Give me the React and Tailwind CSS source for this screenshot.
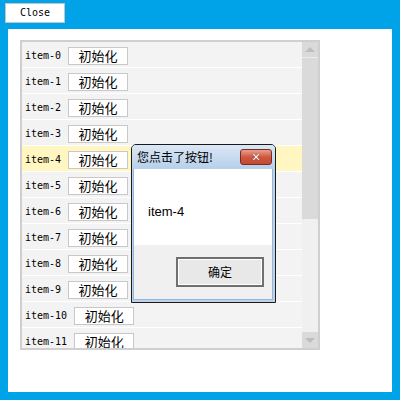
const items = Array.from({ length: 12 }, (_, i) => `item-${i}`)

function Row({ label, active }) {
  return (
    <div
      className={`h-[26px] shrink-0 flex items-center pl-[3px] pt-[2px] border-b border-white ${
        active ? 'bg-[#fff6c2]' : 'bg-[#f3f3f3]'
      }`}
    >
      <span className="text-[10px] leading-none text-black" style={{ fontFamily: '"DejaVu Sans Mono", "Liberation Mono", monospace' }}>
        {label}
      </span>
      <div className="ml-[7px] w-[60px] h-[18px] bg-white border border-[#c8c8c8] flex items-center justify-center text-[13px] leading-none text-black">
        初始化
      </div>
    </div>
  )
}

function Scrollbar() {
  return (
    <div className="w-[16px] h-full bg-[#f0f0f0] flex flex-col">
      <div className="h-[16px] bg-[#dadada] flex items-center justify-center border-b border-[#ececec]">
        <div className="w-0 h-0 border-l-[5px] border-r-[5px] border-b-[5px] border-l-transparent border-r-transparent border-b-[#bdbdbd]" />
      </div>
      <div className="h-[161px] bg-[#dadada]" />
      <div className="flex-1" />
      <div className="h-[16px] bg-[#dadada] flex items-center justify-center">
        <div className="w-0 h-0 border-l-[5px] border-r-[5px] border-t-[5px] border-l-transparent border-r-transparent border-t-[#bdbdbd]" />
      </div>
    </div>
  )
}

function Dialog() {
  return (
    <div className="absolute left-[131px] top-[144px] w-[145px] h-[159px] border border-[#1a1a1a] rounded-t-[5px] bg-[#bcd3ec] flex flex-col overflow-hidden">
      {/* title bar */}
      <div className="h-[24px] shrink-0 flex items-center justify-between pl-[5px] pr-[3px] bg-gradient-to-b from-[#dbe7f5] to-[#b6cfea]">
        <span className="text-[12px] leading-none text-black">您点击了按钮!</span>
        <div className="w-[32px] h-[16px] rounded-[3px] border border-[#7a2a1e] bg-gradient-to-b from-[#e7a08f] via-[#d0573e] to-[#c04a33] flex items-center justify-center">
          <span className="text-[11px] font-bold leading-none text-white" style={{ fontFamily: '"DejaVu Sans", sans-serif', textShadow: '0 0 1px #4a1a10' }}>
            ✕
          </span>
        </div>
      </div>
      <div className="flex-1 mx-[1px] mb-[2px] mr-[2px] flex flex-col border border-[#98b4d8] border-t-0">
        <div className="h-[76px] bg-white pl-[14px] pt-[28px]">
          <span className="text-[13px] leading-none text-black" style={{ fontFamily: '"Liberation Sans", Arial, sans-serif' }}>
            item-4
          </span>
        </div>
        <div className="flex-1 bg-[#f0f0f0] flex justify-end items-start pt-[12px] pr-[8px]">
          <div className="w-[88px] h-[30px] border-2 border-[#6f6f6f] bg-[#e8e8e8] flex items-center justify-center">
            <div className="w-full h-full border border-white flex items-center justify-center text-[12px] leading-none text-black">
              确定
            </div>
          </div>
        </div>
      </div>
    </div>
  )
}

export default function App() {
  return (
    <div
      className="relative w-[400px] h-[400px] bg-[#00a2e8] flex flex-col"
      style={{ fontFamily: '"Noto Sans CJK SC", "Liberation Sans", sans-serif' }}
    >
      <div className="flex pl-[5px] pt-[3px]">
        <button
          className="w-[60px] h-[20px] bg-white border border-[#c3c3c3] text-[10px] leading-none text-black flex items-center justify-center"
          style={{ fontFamily: '"DejaVu Sans Mono", "Liberation Mono", monospace' }}
        >
          Close
        </button>
      </div>

      <div className="mx-[8px] mt-[6px] h-[363px] bg-white pl-[12px] pt-[11px]">
        <div className="w-[300px] h-[310px] border-2 border-[#cfcfcf] flex bg-[#f3f3f3]">
          <div className="flex-1 flex flex-col overflow-hidden">
            {items.map((label, i) => (
              <Row key={label} label={label} active={i === 4} />
            ))}
          </div>
          <Scrollbar />
        </div>
      </div>

      <Dialog />
    </div>
  )
}
